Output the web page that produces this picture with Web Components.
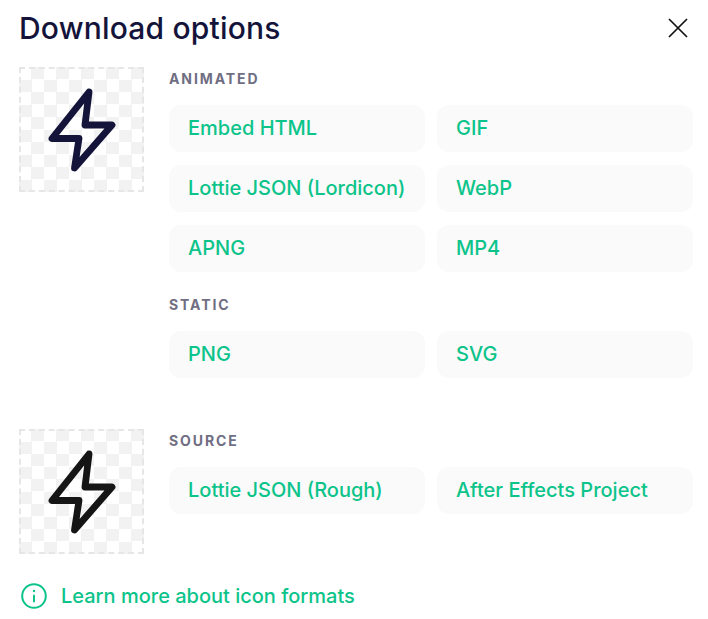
<!DOCTYPE html>
<html>
<head>
<meta charset="utf-8">
<title>Download options</title>
<style>
  body { margin: 0; background: #fff; font-family: Inter, "Liberation Sans", sans-serif; }
</style>
</head>
<body>
<download-dialog>
  <span slot="title">Download options</span>

  <format-row color="#14143a">
    <format-group label="ANIMATED">
      <format-button>Embed HTML</format-button>
      <format-button>GIF</format-button>
      <format-button>Lottie JSON (Lordicon)</format-button>
      <format-button>WebP</format-button>
      <format-button>APNG</format-button>
      <format-button>MP4</format-button>
    </format-group>
    <format-group label="STATIC">
      <format-button>PNG</format-button>
      <format-button>SVG</format-button>
    </format-group>
  </format-row>

  <format-row color="#151515">
    <format-group label="SOURCE">
      <format-button>Lottie JSON (Rough)</format-button>
      <format-button>After Effects Project</format-button>
    </format-group>
  </format-row>

  <span slot="footer">Learn more about icon formats</span>
</download-dialog>

<script>
class DownloadDialog extends HTMLElement {
    constructor() {
        super();
        this.attachShadow({ mode: 'open' });
        this.shadowRoot.innerHTML = `
        <style>
        :host {
            display: block;
            width: 708px;
            height: 619px;
            box-sizing: border-box;
            padding: 8px 15px 0 19px;
            overflow: hidden;
        }
        header {
            display: flex;
            justify-content: space-between;
            align-items: center;
            height: 40px;
            margin-bottom: 19px;
            color: #14143a;
            font-size: 30px;
            font-weight: 500;
            letter-spacing: 0.2px;
        }
        header button {
            all: unset;
            display: flex;
            margin-right: 5px;
        }
        #rows {
            display: flex;
            flex-direction: column;
            gap: 51px;
        }
        footer {
            display: flex;
            align-items: center;
            gap: 14px;
            margin-top: 27px;
            margin-left: 2px;
            color: #0cc48a;
            font-size: 20px;
            font-weight: 500;
            line-height: 30px;
        }
        svg { display: block; }
        </style>
        <header>
            <slot name="title"></slot>
            <button aria-label="Close">
                <svg width="20" height="20" viewBox="0 0 20 20" fill="none" stroke="#111" stroke-width="1.7">
                    <path d="M1 1L19 19M19 1L1 19"/>
                </svg>
            </button>
        </header>
        <div id="rows"><slot></slot></div>
        <footer>
            <svg width="26" height="26" viewBox="0 0 26 26" fill="none" stroke="#0cc48a" stroke-width="2" stroke-linecap="round">
                <circle cx="13" cy="13" r="11.8"/>
                <path d="M13 12.5V18.5"/>
                <path d="M13 8V8.1" stroke-width="2.4"/>
            </svg>
            <slot name="footer"></slot>
        </footer>
        `;
    }
}

class FormatRow extends HTMLElement {
    constructor() {
        super();
        this.attachShadow({ mode: 'open' });
        const color = this.getAttribute('color') || '#14143a';
        this.shadowRoot.innerHTML = `
        <style>
        :host {
            display: flex;
            gap: 25px;
            align-items: flex-start;
        }
        #preview {
            flex: none;
            width: 125px;
            height: 125px;
            box-sizing: border-box;
            border: 2px dashed #e6e6e6;
            background-color: #fff;
            background-image: conic-gradient(#f2f2f2 25%, #fff 0 50%, #f2f2f2 0 75%, #fff 0);
            background-size: 25px 25px;
            background-position: -2px -2px;
            background-origin: padding-box;
        }
        #groups {
            flex: 1;
            display: flex;
            flex-direction: column;
            gap: 21px;
        }
        </style>
        <div id="preview">
            <svg width="121" height="121" viewBox="21 69 121 121" fill="none" stroke="${color}" stroke-width="6.8" stroke-linejoin="round" stroke-linecap="round">
                <path d="M89 92L52 138.5H79L74.5 168L112 125H85Z"/>
            </svg>
        </div>
        <div id="groups"><slot></slot></div>
        `;
    }
}

class FormatGroup extends HTMLElement {
    constructor() {
        super();
        this.attachShadow({ mode: 'open' });
        this.shadowRoot.innerHTML = `
        <style>
        :host { display: block; }
        #label {
            height: 23px;
            line-height: 24px;
            margin-bottom: 15px;
            color: #6f6e82;
            font-size: 14px;
            font-weight: 700;
            letter-spacing: 1.9px;
        }
        #grid {
            display: grid;
            grid-template-columns: 256px 256px;
            gap: 13px 12px;
        }
        </style>
        <div id="label"></div>
        <div id="grid"><slot></slot></div>
        `;
        this.shadowRoot.querySelector('#label').textContent = this.getAttribute('label');
    }
}

class FormatButton extends HTMLElement {
    constructor() {
        super();
        this.attachShadow({ mode: 'open' });
        this.shadowRoot.innerHTML = `
        <style>
        :host {
            display: flex;
            align-items: center;
            height: 47px;
            box-sizing: border-box;
            padding: 0 19px 2px;
            border-radius: 12px;
            background: #fafafa;
            color: #0cc48a;
            font-size: 20px;
            font-weight: 500;
            white-space: nowrap;
        }
        </style>
        <slot></slot>
        `;
    }
}

customElements.define('download-dialog', DownloadDialog);
customElements.define('format-row', FormatRow);
customElements.define('format-group', FormatGroup);
customElements.define('format-button', FormatButton);
</script>
</body>
</html>
